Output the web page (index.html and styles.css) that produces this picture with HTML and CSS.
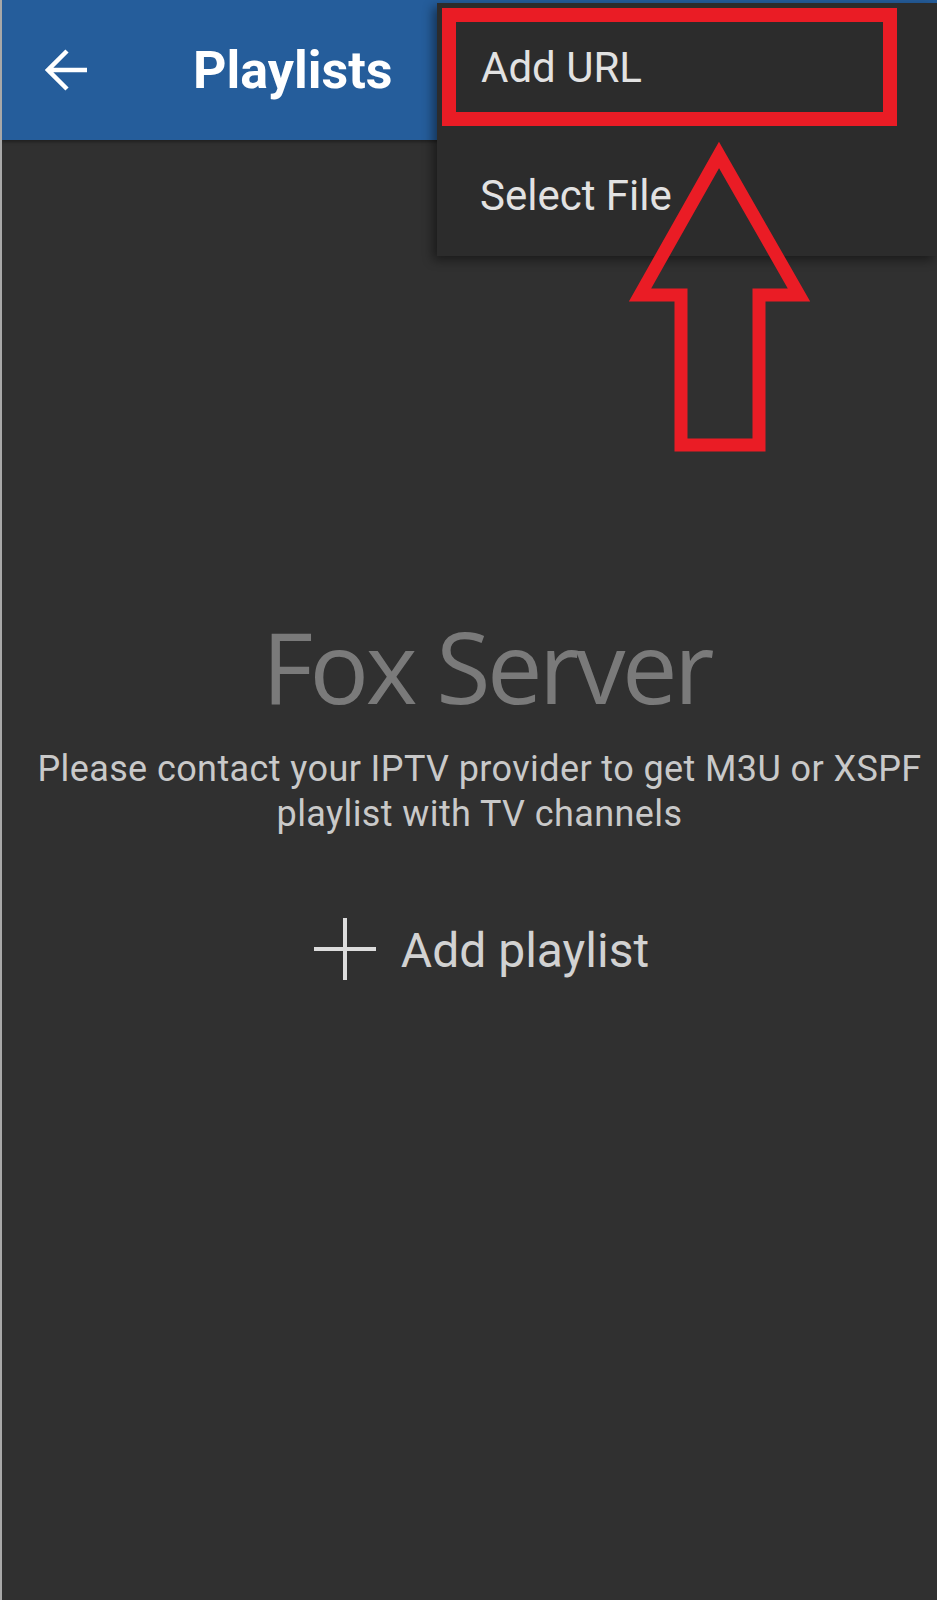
FILE: index.html
```html
<!DOCTYPE html>
<html lang="en">
<head>
<meta charset="utf-8">
<title>Playlists</title>
<link rel="stylesheet" href="styles.css">
</head>
<body>
<div class="screen">
  <header class="toolbar">
    <svg class="back" width="44" height="44" viewBox="0 0 44 44" aria-hidden="true">
      <path d="M42 22 H4 M22 3 L3 22 L22 41" fill="none" stroke="#ffffff" stroke-width="4.5" stroke-linejoin="miter"/>
    </svg>
    <h1 class="title">Playlists</h1>
  </header>

  <main class="content">
    <div class="brand">Fox Server</div>
    <p class="hint">Please contact your IPTV provider to get M3U or XSPF playlist with TV channels</p>
    <div class="add">
      <svg class="plus" width="62" height="62" viewBox="0 0 62 62" aria-hidden="true">
        <path d="M31 0 V62 M0 31 H62" fill="none" stroke="#dcdcdc" stroke-width="4"/>
      </svg>
      <span class="add-label">Add playlist</span>
    </div>
  </main>

  <div class="menu">
    <div class="menu-item menu-item-marked">Add URL</div>
    <div class="menu-item menu-item-second">Select File</div>
  </div>

  <svg class="callout" width="200" height="330" viewBox="0 0 200 330" aria-hidden="true">
    <polygon points="97,20 177,160 137,160 137,310 59,310 59,160 18,160" fill="none" stroke="#ea1c25" stroke-width="13" stroke-linejoin="miter"/>
  </svg>
</div>
</body>
</html>
```

FILE: styles.css
```css
* {
  box-sizing: border-box;
}

html, body {
  margin: 0;
  padding: 0;
  background: #303030;
}

.screen {
  position: relative;
  width: 937px;
  height: 1600px;
  overflow: hidden;
  background: #303030;
  border-left: 2px solid #a8a8a8;
  font-family: Roboto, "Liberation Sans", sans-serif;
}

.toolbar {
  display: flex;
  align-items: center;
  height: 140px;
  background: #255d9b;
  box-shadow: 0 2px 3px rgba(0, 0, 0, 0.35);
}

.back {
  display: block;
  margin-left: 43px;
  flex: none;
}

.title {
  margin: 0 0 0 104px;
  font-size: 52px;
  font-weight: 700;
  color: #ffffff;
  line-height: 1;
  padding-top: 2px;
}

.content {
  display: flex;
  flex-direction: column;
  align-items: center;
  padding-left: 20px;
}

.brand {
  margin-top: 476px;
  margin-left: 14px;
  font-family: "Open Sans", "Noto Sans", sans-serif;
  font-size: 99px;
  line-height: 99px;
  letter-spacing: -3.5px;
  color: #7a7a7a;
  white-space: nowrap;
}

.hint {
  margin: 32px 0 0;
  font-size: 36px;
  line-height: 45px;
  letter-spacing: 0.4px;
  color: #c9c9c9;
  text-align: center;
}

.add {
  display: flex;
  align-items: center;
  gap: 25px;
  margin-top: 79px;
  margin-left: 4px;
  height: 65px;
}

.plus {
  display: block;
  flex: none;
}

.add-label {
  font-size: 48px;
  line-height: 65px;
  color: #d2d2d2;
  padding-top: 4px;
}

.menu {
  position: absolute;
  top: 3px;
  left: 435px;
  right: 0;
  height: 253px;
  background: #2c2c2c;
  box-shadow: -4px 4px 10px rgba(0, 0, 0, 0.45);
  display: flex;
  flex-direction: column;
}

.menu-item {
  display: flex;
  align-items: center;
  font-size: 42px;
  color: #e2e2e2;
  white-space: nowrap;
}

.menu-item-marked {
  margin: 5px 40px 0 5px;
  height: 118px;
  padding-left: 25px;
  padding-bottom: 0;
  border: 14px solid #ea1c25;
}

.menu-item-second {
  height: 130px;
  padding-left: 43px;
  padding-top: 8px;
}

.callout {
  position: absolute;
  left: 620px;
  top: 135px;
  display: block;
}
```
